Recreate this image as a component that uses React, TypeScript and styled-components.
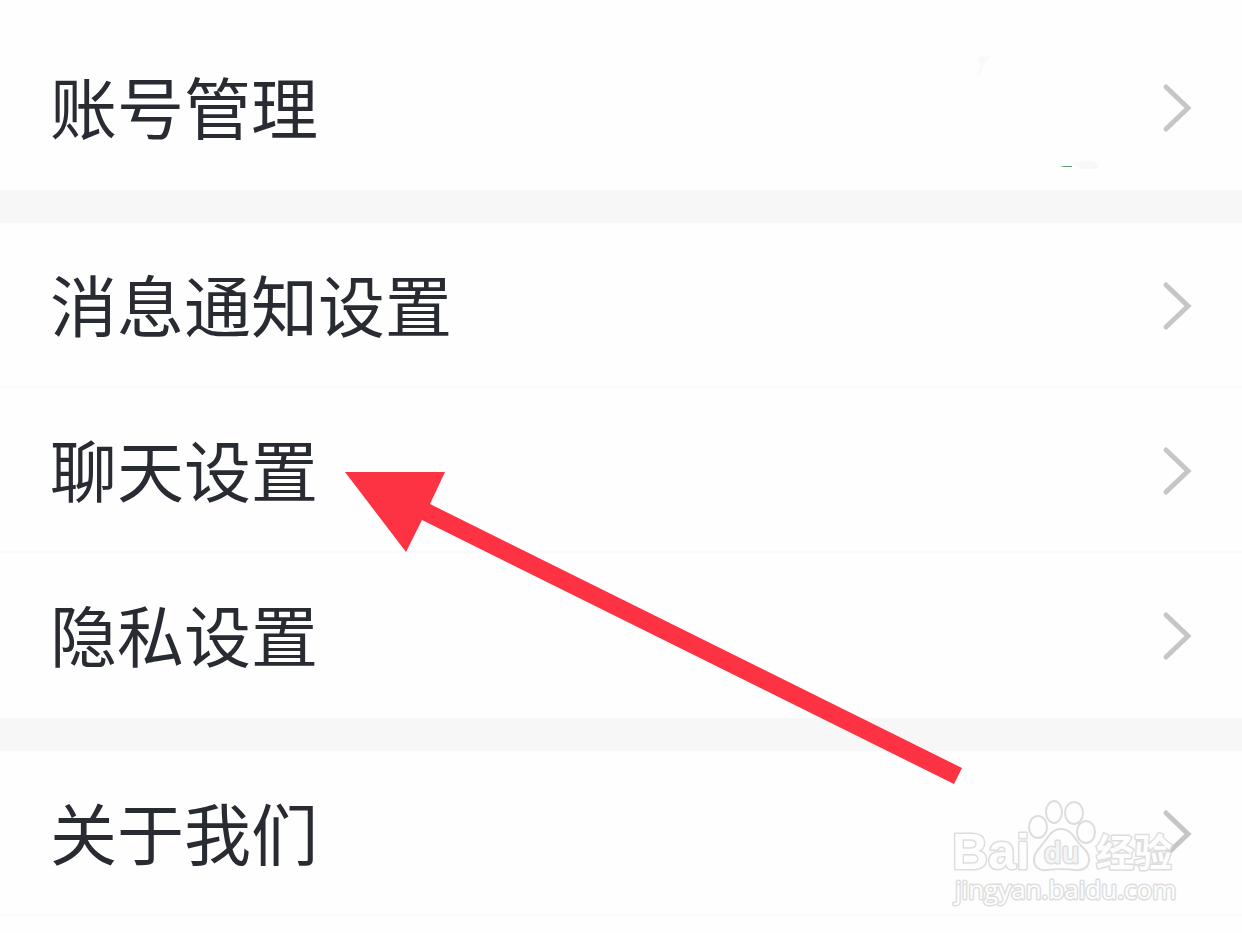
import React from "react";
import styled, { createGlobalStyle } from "styled-components";

const GlobalStyle = createGlobalStyle`
  * { box-sizing: border-box; }
  html, body { margin: 0; padding: 0; background: #fefefe; }
  body { font-family: "Noto Sans CJK SC", sans-serif; color: #292b33; }
`;

const Page = styled.main`
  position: relative;
  padding: 25px 0 16px;
  overflow: hidden;
`;

const Groups = styled.div`
  display: flex;
  flex-direction: column;
  gap: 33px;
  background: #f7f7f7;
`;

const Group = styled.section`
  position: relative;
  background: #fefefe;
`;

const Row = styled.button<{ $divided?: boolean }>`
  display: flex;
  align-items: center;
  width: 100%;
  height: 165px;
  padding: 0 50px;
  border: 0;
  background: transparent;
  box-shadow: ${(p) => (p.$divided ? "inset 0 -2px #fbfbfb" : "none")};
  color: inherit;
  font-family: inherit;
  text-align: left;
  cursor: pointer;
`;

const Label = styled.span`
  flex: 1;
  padding-bottom: 6px;
  font-size: 67px;
  font-weight: 400;
  line-height: 96px;
  white-space: nowrap;
`;

const AvatarTrace = styled.svg`
  flex: none;
  width: 122px;
  height: 122px;
  margin-right: 64px;
`;

const ChevronIcon = styled.svg`
  flex: none;
  width: 30px;
  height: 50px;
`;

const Arrow = styled.svg`
  position: absolute;
  top: 465px;
  left: 340px;
  width: 630px;
  height: 325px;
  pointer-events: none;
`;

const Watermark = styled.svg`
  position: absolute;
  top: 39px;
  right: 57px;
  width: 240px;
  height: 125px;
  pointer-events: none;
`;

const Chevron = () => (
  <ChevronIcon viewBox="0 0 30 50" fill="none" aria-hidden="true">
    <path d="M4 4 L26 25 L4 46" stroke="#c6c6c6" strokeWidth="5" strokeLinecap="round" />
  </ChevronIcon>
);

type Item = { label: string; avatar?: boolean };

const groups: Item[][] = [
  [{ label: "账号管理", avatar: true }],
  [{ label: "消息通知设置" }, { label: "聊天设置" }, { label: "隐私设置" }],
  [{ label: "关于我们" }],
];

const Brand = () => (
  <Watermark viewBox="0 0 240 125" role="img" aria-label="Baidu 经验">
    <g fill="#fefefe" fillOpacity="0.8" stroke="#dddddd" strokeWidth="2">
      <ellipse cx="93" cy="37" rx="9" ry="11" />
      <ellipse cx="109" cy="22" rx="8" ry="11" />
      <ellipse cx="129" cy="23" rx="9" ry="11" />
      <ellipse cx="141" cy="42" rx="9" ry="11" />
      <path d="M116 39 C108 39 104 45 100 51 C95 58 89 62 89 70 C89 77 94 81 102 80 C109 79 123 79 130 80 C139 81 144 77 144 69 C144 61 137 58 132 51 C128 45 124 39 116 39 Z" />
    </g>
    <g fill="#fefefe" stroke="#dddddd" strokeWidth="3" strokeLinejoin="round" paintOrder="stroke">
      <text x="7" y="79" fontFamily="Liberation Sans, sans-serif" fontWeight="700" fontSize="50">Bai</text>
      <text x="99" y="73" fontFamily="Open Sans, sans-serif" fontWeight="600" fontSize="28" fill="#f4f4f4">du</text>
      <text x="151" y="76" fontFamily="Noto Sans CJK SC, sans-serif" fontWeight="700" fontSize="38">经验</text>
      <text x="10" y="109" fontFamily="Open Sans, sans-serif" fontWeight="400" fontSize="26">jingyan.baidu.com</text>
    </g>
  </Watermark>
);

export default function App() {
  return (
    <>
      <GlobalStyle />
      <Page>
        <Groups>
          {groups.map((items, g) => (
            <Group key={g}>
              {items.map((item, i) => (
                <Row key={item.label} type="button" $divided={g === 2 || i < items.length - 1}>
                  <Label>{item.label}</Label>
                  {item.avatar && (
                    <AvatarTrace viewBox="0 0 122 122" aria-hidden="true">
                      <path d="M2 10 L14 9 L8 18 L4 28 L1 28 L4 17 Z" fill="#f9f9f9" />
                      <path d="M95 116 L114 114 L122 116 V123 H108 Z" fill="#f8f8f8" />
                      <path d="M84 120 L88 119 H96 V120 Z" fill="#5c9a76" />
                    </AvatarTrace>
                  )}
                  <Chevron />
                </Row>
              ))}
              {g === groups.length - 1 && <Brand />}
            </Group>
          ))}
        </Groups>
        <Arrow viewBox="0 0 630 325" aria-hidden="true">
          <path d="M5 7 H105 L90 39 L622 303 L614 319 L82 55 L66 87 Z" fill="#fd3344" />
        </Arrow>
      </Page>
    </>
  );
}
